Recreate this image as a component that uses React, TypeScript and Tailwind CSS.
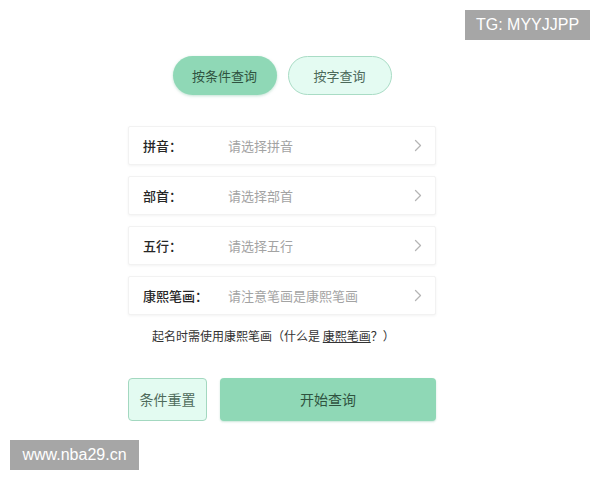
import React from 'react';

const font = { fontFamily: '"Noto Sans CJK SC", "Noto Sans", sans-serif' };

const rows = [
  { label: '拼音：', placeholder: '请选择拼音' },
  { label: '部首：', placeholder: '请选择部首' },
  { label: '五行：', placeholder: '请选择五行' },
  { label: '康熙笔画：', placeholder: '请注意笔画是康熙笔画' },
];

const Chevron = () => (
  <svg width="8" height="13" viewBox="0 0 8 13" fill="none">
    <path d="M1.5 1.5L6.5 6.5L1.5 11.5" stroke="#b5b5b5" strokeWidth="1.3" strokeLinecap="round" strokeLinejoin="round" />
  </svg>
);

const App: React.FC = () => {
  return (
    <div className="relative w-[600px] h-[480px] bg-white overflow-hidden" style={font}>
      <div className="ml-[128px] w-[308px] flex flex-col">
        {/* Tabs */}
        <div className="flex justify-center gap-[11px] pt-[56px]">
          <button className="w-[104px] h-[39px] rounded-full bg-[#8fd8b6] text-[13px] text-[#2f5340] shadow-[0_1px_3px_rgba(80,170,130,0.35)]">
            按条件查询
          </button>
          <button className="w-[104px] h-[39px] rounded-full bg-[#e4fbf2] border border-[#a9dcc5] text-[13px] text-[#4c6a5a]">
            按字查询
          </button>
        </div>

        {/* Fields */}
        <div className="flex flex-col gap-[11px] mt-[31px]">
          {rows.map((r) => (
            <div
              key={r.label}
              className="h-[39px] flex items-center bg-white border border-[#f2f2f2] rounded-[2px] shadow-[0_1px_3px_rgba(0,0,0,0.05)] pl-[14px] pr-[13px]"
            >
              <span className="w-[85px] text-[13px] font-medium text-[#262626]">{r.label}</span>
              <span className="flex-1 text-[13px] text-[#a3a3a3]">{r.placeholder}</span>
              <Chevron />
            </div>
          ))}
        </div>

        {/* Note */}
        <p className="mt-[12px] pl-[24px] text-[12px] text-[#333]">
          起名时需使用康熙笔画（什么是 <span className="underline">康熙笔画</span>？）
        </p>

        {/* Actions */}
        <div className="flex gap-[13px] mt-[33px]">
          <button className="w-[79px] h-[43px] rounded-[4px] bg-[#e3fbf1] border border-[#a3d8c0] text-[14px] text-[#4f6b5c]">
            条件重置
          </button>
          <button className="flex-1 h-[43px] rounded-[4px] bg-[#8fd8b6] text-[14px] text-[#2f5340] shadow-[0_1px_2px_rgba(80,170,130,0.3)]">
            开始查询
          </button>
        </div>
      </div>

      {/* Watermarks */}
      <div
        className="absolute left-[465px] top-[10px] w-[125px] h-[30px] bg-[#a6a6a6] text-white text-[16px] flex items-center justify-center"
        style={{ fontFamily: '"Liberation Sans", Arial, sans-serif' }}
      >
        TG: MYYJJPP
      </div>
      <div
        className="absolute left-[10px] top-[440px] w-[129px] h-[30px] bg-[#a6a6a6] text-white text-[16px] flex items-center justify-center"
        style={{ fontFamily: '"Liberation Sans", Arial, sans-serif' }}
      >
        www.nba29.cn
      </div>
    </div>
  );
};

export default App;
